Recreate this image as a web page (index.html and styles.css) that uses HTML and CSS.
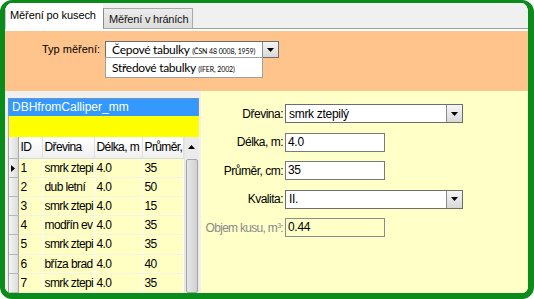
FILE: index.html
```html
<!DOCTYPE html>
<html lang="cs">
<head>
    <meta charset="UTF-8">
    <title>Měření</title>
    <link rel="stylesheet" href="styles.css">
</head>
<body>
    <div class="frame">
        <!-- Tab strip -->
        <div class="tabs">
            <div class="tab active">Měření po kusech</div>
            <div class="tab">Měření v hráních</div>
            <div class="tab-fill"></div>
        </div>

        <!-- Measurement type -->
        <div class="top-panel">
            <span class="typ-label">Typ měření:</span>
            <div class="combo-wrap">
                <div class="combo typ-combo">
                    <span class="combo-text">Čepové tabulky <small>(ČSN 48 0008, 1959)</small></span>
                    <span class="drop-btn"><svg width="7" height="4" viewBox="0 0 7 4"><path d="M0 0H7L3.5 4Z" fill="#000"/></svg></span>
                </div>
                <ul class="drop-list">
                    <li>Středové tabulky <small>(IFER, 2002)</small></li>
                </ul>
            </div>
        </div>

        <div class="lower">
            <!-- Data grid -->
            <div class="left">
                <div class="source">DBHfromCalliper_mm</div>
                <div class="filter"></div>
                <div class="grid">
                    <table>
                        <thead>
                            <tr><th class="rh"></th><th>ID</th><th>Dřevina</th><th>Délka, m</th><th>Průměr,</th></tr>
                        </thead>
                        <tbody>
                            <tr><td class="rh current"><svg width="4" height="7" viewBox="0 0 4 7"><path d="M0 0V7L4 3.5Z" fill="#000"/></svg></td><td>1</td><td>smrk ztepi</td><td>4.0</td><td>35</td></tr>
                            <tr><td class="rh"></td><td>2</td><td>dub letní</td><td>4.0</td><td>50</td></tr>
                            <tr><td class="rh"></td><td>3</td><td>smrk ztepi</td><td>4.0</td><td>15</td></tr>
                            <tr><td class="rh"></td><td>4</td><td>modřín ev</td><td>4.0</td><td>35</td></tr>
                            <tr><td class="rh"></td><td>5</td><td>smrk ztepi</td><td>4.0</td><td>35</td></tr>
                            <tr><td class="rh"></td><td>6</td><td>bříza brad</td><td>4.0</td><td>40</td></tr>
                            <tr><td class="rh"></td><td>7</td><td>smrk ztepi</td><td>4.0</td><td>35</td></tr>
                        </tbody>
                    </table>
                    <div class="scrollbar">
                        <div class="scroll-up"><svg width="7" height="4" viewBox="0 0 7 4"><path d="M0 4H7L3.5 0Z" fill="#000"/></svg></div>
                        <div class="scroll-thumb"></div>
                    </div>
                </div>
            </div>

            <!-- Detail form -->
            <div class="form">
                <span class="lbl">Dřevina:</span>
                <div class="combo wide">
                    <span class="combo-text">smrk ztepilý</span>
                    <span class="drop-btn"><svg width="7" height="4" viewBox="0 0 7 4"><path d="M0 0H7L3.5 4Z" fill="#000"/></svg></span>
                </div>

                <span class="lbl">Délka, m:</span>
                <div class="textbox">4.0</div>

                <span class="lbl">Průměr, cm:</span>
                <div class="textbox">35</div>

                <span class="lbl">Kvalita:</span>
                <div class="combo wide">
                    <span class="combo-text">II.</span>
                    <span class="drop-btn"><svg width="7" height="4" viewBox="0 0 7 4"><path d="M0 0H7L3.5 4Z" fill="#000"/></svg></span>
                </div>

                <span class="lbl muted">Objem kusu, m<sup>3</sup>:</span>
                <div class="textbox readonly">0.44</div>
            </div>
        </div>
    </div>
</body>
</html>
```

FILE: styles.css
```css
* {
    box-sizing: border-box;
    margin: 0;
    padding: 0;
}

body {
    background: #ffffff;
    font-family: 'Liberation Sans', Arial, sans-serif;
    font-size: 12px;
    color: #000;
}

.frame {
    width: 534px;
    height: 299px;
    border-style: solid;
    border-color: #0b8b19;
    border-width: 3px 6px 6px 5px;
    border-radius: 12px;
    overflow: hidden;
    display: flex;
    flex-direction: column;
    background: #f0f0f0;
}

/* Tabs */
.tabs {
    height: 26px;
    display: flex;
    align-items: flex-end;
    background: #f0f0f0;
    white-space: nowrap;
}

.tab {
    width: 90px;
    height: 21px;
    padding: 0 0 0 5px;
    display: flex;
    align-items: center;
    font-size: 11px;
    letter-spacing: -0.2px;
    color: #111;
    background: linear-gradient(#ececec, #dcdcdc);
    border: 1px solid #a8a8a8;
    border-left-color: #8a8a8a;
}

.tab.active {
    height: 26px;
    width: 98px;
    padding: 0 0 2px 4px;
    color: #000;
    background: #ffffff;
    border: none;
    border-left: 1px solid #c8c8c8;
    letter-spacing: -0.1px;
}

.tab-fill {
    flex: 1;
    height: 100%;
    border-bottom: 1px solid #a0a0a0;
}

/* Top panel */
.top-panel {
    height: 62px;
    border-top: 2px solid #fff;
    background: #ffc48b;
    display: flex;
    align-items: flex-start;
    padding: 10px 0 0 37px;
    gap: 5px;
}

.typ-label {
    font-size: 11px;
    line-height: 17px;
}

.combo-wrap {
    position: relative;
}

.combo {
    height: 17px;
    display: flex;
    align-items: center;
    background: #fff;
    border: 1px solid #6d6d6d;
}

.combo-text {
    flex: 1;
    padding-left: 3px;
    white-space: nowrap;
    overflow: hidden;
}

.typ-combo {
    width: 174px;
    font-family: Lato, 'Open Sans', sans-serif;
    font-size: 12px;
    letter-spacing: -0.3px;
}

.typ-combo .combo-text {
    padding-left: 6px;
}

small {
    font-size: 7px;
    letter-spacing: -0.1px;
}

.drop-btn {
    width: 16px;
    height: 100%;
    display: flex;
    align-items: center;
    justify-content: center;
    background: linear-gradient(#f6f6f6, #d8d8d8);
    border-left: 1px solid #8c8c8c;
}

.drop-list {
    position: absolute;
    left: 0;
    top: 16px;
    width: 158px;
    list-style: none;
    background: #fff;
    border: 1px solid #a0a0a0;
    font-family: Lato, 'Open Sans', sans-serif;
    font-size: 12px;
    letter-spacing: -0.3px;
    white-space: nowrap;
}

.drop-list li {
    height: 19px;
    line-height: 19px;
    padding-left: 6px;
}

/* Lower area */
.lower {
    flex: 1;
    display: flex;
    min-height: 0;
}

.left {
    width: 196px;
    padding: 7px 2px 0 3px;
    display: flex;
    flex-direction: column;
    background: #f0f0f0;
}

.source {
    height: 18px;
    line-height: 17px;
    padding-left: 3px;
    color: #fff;
    background: #3399ff;
    border: 1px solid #6f93c0;
    border-bottom: none;
}

.filter {
    height: 21px;
    background: #ffff00;
    border-left: 1px solid #b0b0b0;
}

.grid {
    flex: 1;
    display: flex;
    overflow: hidden;
    background: #ffffc8;
    border-left: 1px solid #a0a0a0;
}

table {
    border-collapse: collapse;
    table-layout: fixed;
    width: 174px;
    letter-spacing: -0.6px;
}

th, td {
    padding: 0 0 0 2px;
    text-align: left;
    font-weight: normal;
    white-space: nowrap;
    overflow: hidden;
    border-right: 1px solid #ffffff;
    border-bottom: 1px solid #f4f4e4;
}

th {
    height: 21px;
    background: linear-gradient(#ffffff, #f0f0f0);
    border-right: 1px solid #e0e0e0;
    border-bottom: 1px solid #d8d8d8;
}

td {
    height: 19px;
    background: #ffffc4;
}

th:nth-child(1), td:nth-child(1) { width: 9px; }
th:nth-child(2), td:nth-child(2) { width: 24px; }
th:nth-child(3), td:nth-child(3) { width: 52px; }
th:nth-child(4), td:nth-child(4) { width: 48px; }
th:nth-child(5), td:nth-child(5) { width: 41px; }

.rh {
    padding: 0;
    background: linear-gradient(90deg, #f4f4f4, #dcdcdc);
    border-right: 1px solid #a8a8a8;
    border-bottom: 1px solid #b8b8b8;
}

td.current {
    padding-left: 2px;
}

.scrollbar {
    width: 16px;
    display: flex;
    flex-direction: column;
    background: #ebebeb;
    border-left: 1px solid #e4e4e4;
}

.scroll-up {
    height: 20px;
    display: flex;
    align-items: center;
    justify-content: center;
}

.scroll-thumb {
    flex: 1;
    margin: 2px 1px 0 1px;
    background: linear-gradient(90deg, #e6e6e6, #d2d2d2);
    border: 1px solid #a6a6a6;
    border-radius: 2px;
}

/* Detail form */
.form {
    flex: 1;
    background: #ffffc8;
    display: grid;
    grid-template-columns: 82px auto;
    grid-auto-rows: 19px;
    row-gap: 9.5px;
    column-gap: 2px;
    align-content: start;
    justify-items: start;
    padding-top: 13px;
}

.lbl {
    justify-self: end;
    align-self: center;
    white-space: nowrap;
    letter-spacing: -0.5px;
}

.lbl.muted {
    color: #8a8a8a;
    letter-spacing: -0.7px;
}

sup {
    font-size: 7px;
    vertical-align: 4px;
    line-height: 0;
}

.wide {
    width: 178px;
    height: 19px;
    letter-spacing: -0.3px;
}

.textbox {
    width: 100px;
    height: 19px;
    line-height: 17px;
    padding-left: 2px;
    background: #fff;
    border: 1px solid #7a7a7a;
    letter-spacing: -0.3px;
}

.textbox.readonly {
    background: #ffffc8;
    border-color: #8c8c8c;
}
```
